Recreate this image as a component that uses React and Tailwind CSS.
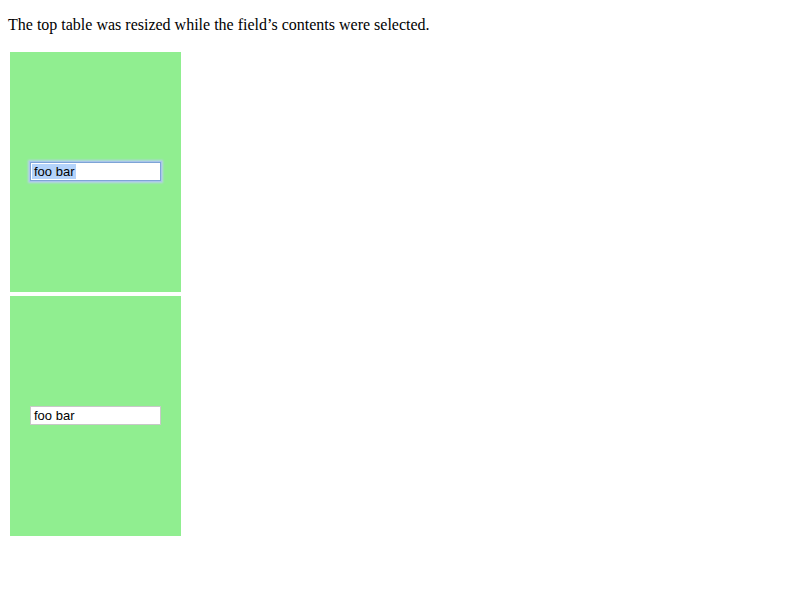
export default function App() {
  return (
    <div className="min-h-[600px] bg-white p-2 font-['Liberation_Serif',serif] text-black">
      <p className="my-2 text-base leading-[18px]">The top table was resized while the field’s contents were selected.</p>
      <div className="mt-4 flex flex-col">
        {/* top cell: field focused with its text selected */}
        <div className="p-[2px]">
          <div className="h-[240px] w-[171px] bg-[#90ee90] px-5 pt-[110px]">
            <div className="flex h-[19px] w-[131px] items-center border border-[#7ea4d6] bg-white pl-[1px] font-['Liberation_Sans',Arial,sans-serif] text-[13px] shadow-[0_0_0_1px_#a9c6ea,0_0_2px_2px_#b8d0ee]">
              <span className="bg-[#b4d3fb] px-[2px] leading-[15px]">foo bar</span>
            </div>
          </div>
        </div>
        <div className="p-[2px]">
          <div className="h-[240px] w-[171px] bg-[#90ee90] px-5 pt-[110px]">
            <div className="flex h-[19px] w-[131px] items-center border border-[#c8c8c8] bg-white pl-[3px] font-['Liberation_Sans',Arial,sans-serif] text-[13px]">
              foo bar
            </div>
          </div>
        </div>
      </div>
    </div>
  );
}
